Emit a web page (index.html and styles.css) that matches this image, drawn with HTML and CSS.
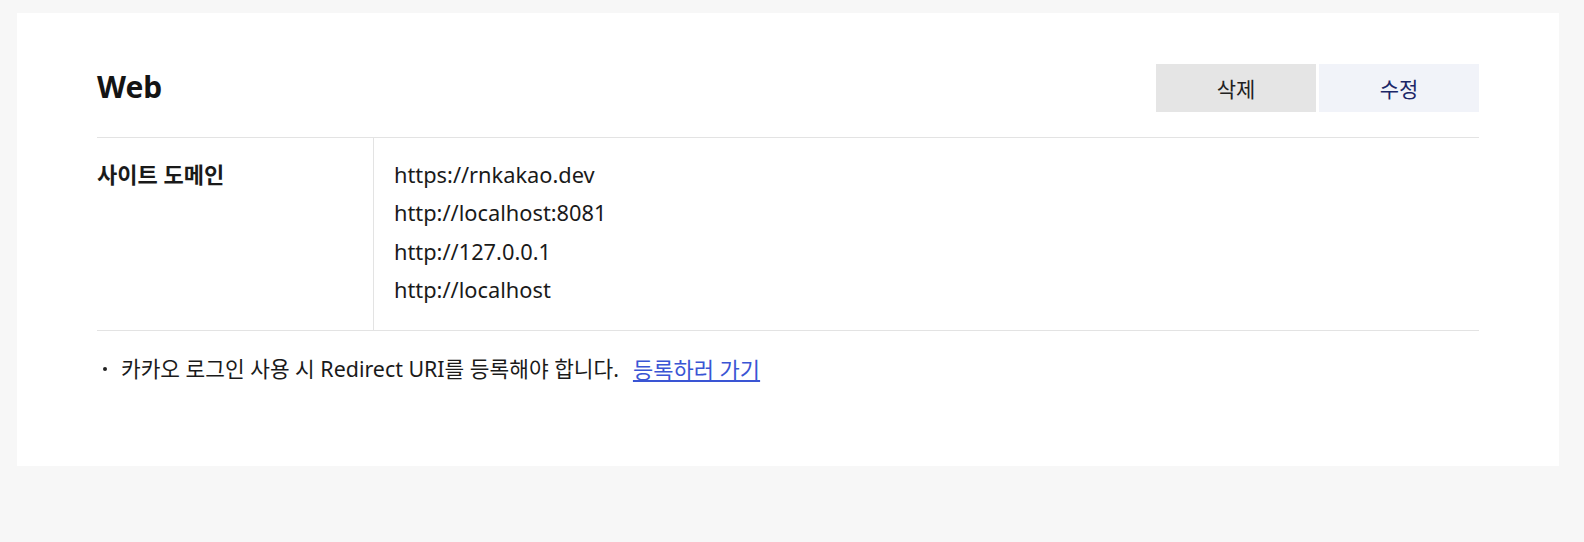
FILE: index.html
```html
<!DOCTYPE html>
<html lang="ko">
<head>
<meta charset="utf-8">
<link rel="stylesheet" href="styles.css">
</head>
<body>
<div class="page">
  <section class="card">
    <header class="card-head">
      <h2 class="title">Web</h2>
      <div class="actions">
        <button class="btn btn-delete">삭제</button>
        <button class="btn btn-edit">수정</button>
      </div>
    </header>
    <div class="table">
      <div class="row">
        <div class="label">사이트 도메인</div>
        <div class="value">
          <div class="url">https://rnkakao.dev</div>
          <div class="url">http://localhost:8081</div>
          <div class="url">http://127.0.0.1</div>
          <div class="url">http://localhost</div>
        </div>
      </div>
    </div>
    <ul class="notes">
      <li class="note">카카오 로그인 사용 시 Redirect URI를 등록해야 합니다. <a class="link" href="#">등록하러 가기</a></li>
    </ul>
  </section>
</div>
</body>
</html>
```
FILE: styles.css
```css
html, body {
  margin: 0;
  padding: 0;
  background: #f7f7f7;
}
body {
  font-family: "Noto Sans", "Noto Sans CJK KR", sans-serif;
  color: #1a1a1a;
}
.page {
  padding: 13px 25px 76px 17px;
}
.card {
  background: #ffffff;
  padding: 51px 80px 82px;
}
.card-head {
  display: flex;
  justify-content: space-between;
  align-items: center;
  height: 48px;
}
.title {
  margin: 0 0 3px;
  font-size: 30px;
  line-height: 40px;
  font-weight: 700;
  color: #141414;
}
.actions {
  display: flex;
  gap: 3px;
}
.btn {
  width: 160px;
  height: 48px;
  border: 0;
  font-family: inherit;
  font-size: 21px;
  padding: 0;
  cursor: pointer;
}
.btn-delete {
  background: #e5e5e5;
  color: #222222;
}
.btn-edit {
  background: #f1f3f9;
  color: #1b2668;
}
.table {
  margin-top: 25px;
  border-top: 1px solid #e3e3e3;
  border-bottom: 1px solid #e3e3e3;
}
.row {
  display: flex;
}
.label {
  width: 277px;
  box-sizing: border-box;
  border-right: 1px solid #e3e3e3;
  font-size: 22px;
  font-weight: 700;
  line-height: 38.4px;
  padding-top: 17px;
}
.value {
  padding: 18px 0 20px 20px;
  font-size: 21.8px;
  line-height: 38.4px;
}
.notes {
  list-style: none;
  margin: 0;
  padding: 23px 0 0 6px;
}
.note {
  font-size: 21.4px;
  line-height: 30px;
  display: flex;
  align-items: center;
}
.note::before {
  content: "";
  width: 4px;
  height: 4px;
  border-radius: 50%;
  background: #222;
  margin-right: 14px;
  flex: none;
}
.link {
  color: #3a55d4;
  font-size: 22px;
  text-decoration: underline;
  margin-left: 14px;
}
```
